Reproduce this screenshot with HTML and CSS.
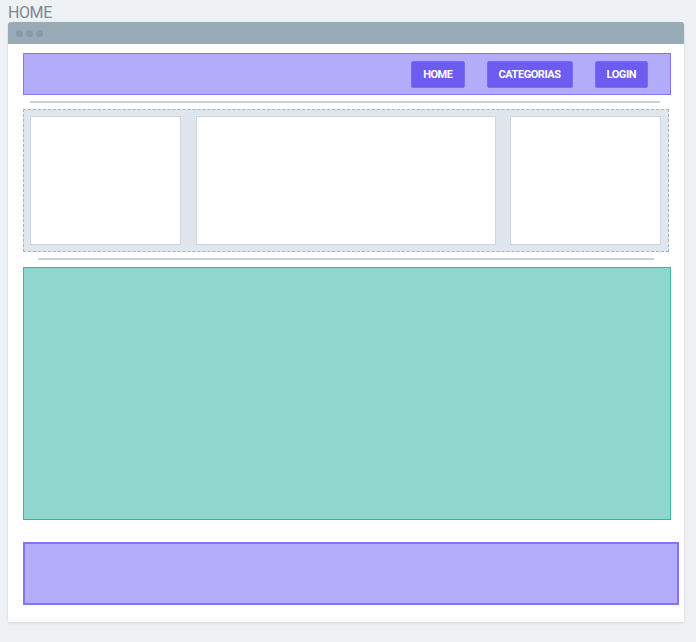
FILE: index.html
```html
<!DOCTYPE html>
<html>
<head>
<meta charset="utf-8">
<link rel="stylesheet" href="styles.css">
</head>
<body>
<div class="page-title">HOME</div>
<div class="window">
  <div class="titlebar"><span class="dot"></span><span class="dot"></span><span class="dot"></span></div>
  <div class="content">
    <nav class="nav">
      <a class="btn">HOME</a>
      <a class="btn">CATEGORIAS</a>
      <a class="btn">LOGIN</a>
    </nav>
    <div class="divider d1"></div>
    <div class="cards">
      <div class="card"></div>
      <div class="card"></div>
      <div class="card"></div>
    </div>
    <div class="divider d2"></div>
    <div class="main"></div>
    <div class="footer"></div>
  </div>
</div>
</body>
</html>
```
FILE: styles.css
```css
html, body { margin: 0; padding: 0; }
body {
  background: #eef2f5;
  width: 696px;
  height: 642px;
  font-family: "Roboto", "Liberation Sans", sans-serif;
}
.page-title {
  height: 22px;
  padding-left: 8px;
  font-size: 16px;
  line-height: 25px;
  letter-spacing: -0.4px;
  color: #7b8896;
  font-family: "Roboto", "Liberation Sans", sans-serif;
}
.window {
  margin-left: 8px;
  width: 676px;
  background: #fff;
  box-shadow: 0 1px 3px rgba(0,0,0,0.12);
  border-radius: 3px 3px 0 0;
}
.titlebar {
  height: 22px;
  background: #9aabb8;
  border-radius: 3px 3px 0 0;
  display: flex;
  align-items: center;
  gap: 3px;
  padding-left: 8px;
}
.dot {
  width: 7px; height: 7px;
  border-radius: 50%;
  background: #8999a7;
}
.content {
  display: flex;
  flex-direction: column;
  align-items: flex-start;
  padding: 9px 0 17px 15px;
}
.nav {
  box-sizing: border-box;
  width: 648px;
  height: 42px;
  background: #b3adf9;
  border: 1px solid #8577f3;
  display: flex;
  justify-content: flex-end;
  align-items: center;
  gap: 22px;
  padding-right: 22px;
}
.btn {
  box-sizing: border-box;
  height: 27px;
  padding: 0 11px;
  background: #6c5cf0;
  border: 1px solid #7a6cf2;
  border-radius: 2px;
  color: #fff;
  font-weight: 700;
  font-size: 11px;
  line-height: 25px;
  letter-spacing: -0.45px;
}
.divider {
  height: 2px;
  background: #c9d0d8;
}
.d1 { margin: 6px 0 0 7px; width: 630px; }
.cards {
  box-sizing: border-box;
  margin-top: 6px;
  width: 646px;
  height: 143px;
  background: #dfe6ee;
  border: 1px dashed #a9b3bf;
  padding: 6px 7px 6px 6px;
  display: grid;
  grid-template-columns: 151px 300px 151px;
  justify-content: space-between;
}
.card {
  background: #fff;
  border: 1px solid #cdd6e0;
}
.d2 { margin: 6px 0 0 15px; width: 616px; }
.main {
  box-sizing: border-box;
  margin-top: 7px;
  width: 648px;
  height: 253px;
  background: #8fd7ce;
  border: 1px solid #3fb3a2;
}
.footer {
  box-sizing: border-box;
  margin-top: 22px;
  width: 656px;
  height: 63px;
  background: #b3adfa;
  border: 2px solid #8375f6;
}
```
